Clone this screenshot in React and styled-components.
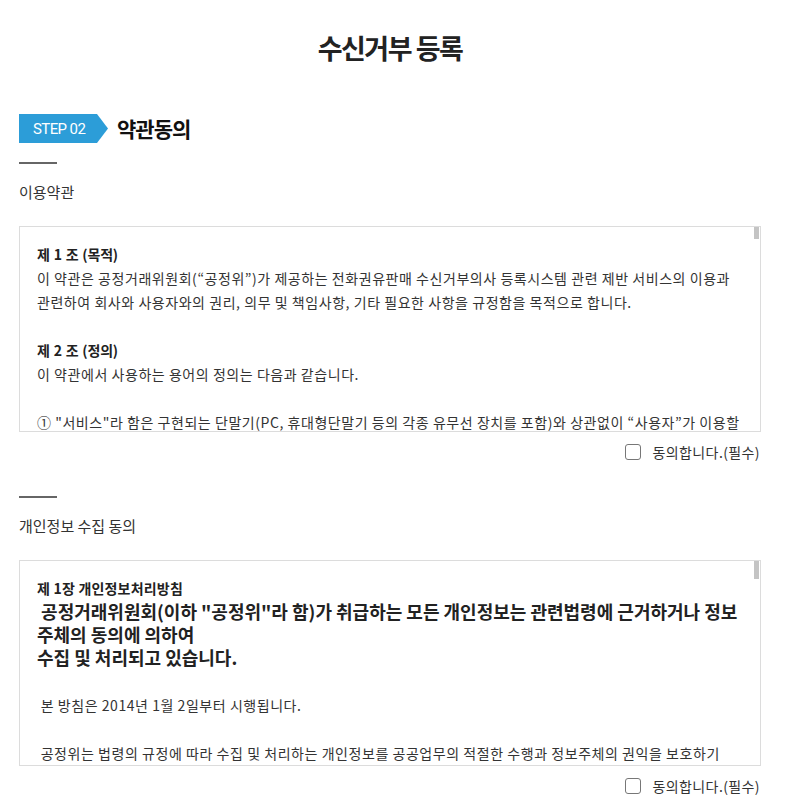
import React from 'react';
import styled, { createGlobalStyle } from 'styled-components';

const GlobalStyle = createGlobalStyle`
  html, body {
    margin: 0;
    padding: 0;
    background: #fff;
  }
  body {
    font-family: "Noto Sans CJK KR", "Noto Sans", sans-serif;
    color: #333;
  }
`;

const Page = styled.div`
  width: 742px;
  margin-left: 19px;
  padding: 30px 0 40px;
`;

const Title = styled.h1`
  margin: 0;
  text-align: center;
  font-size: 27px;
  line-height: 36px;
  font-weight: 700;
  letter-spacing: -1.5px;
  color: #222;
`;

const StepHeader = styled.div`
  display: flex;
  align-items: center;
  gap: 9px;
  margin-top: 48px;
`;

const StepBadge = styled.span`
  display: flex;
  align-items: center;
  box-sizing: border-box;
  width: 89px;
  height: 29px;
  padding-left: 14px;
  background: #2c9dd8;
  clip-path: polygon(0 0, 78px 0, 89px 50%, 78px 100%, 0 100%);
  color: #fff;
  font-family: Roboto, "Noto Sans", sans-serif;
  font-size: 15px;
  letter-spacing: -0.6px;
`;

const StepTitle = styled.h2`
  margin: 0;
  font-size: 21px;
  line-height: 29px;
  font-weight: 700;
  letter-spacing: -1px;
  color: #111;
`;

const Section = styled.section`
  margin-top: ${(p) => p.$gap}px;
`;

const Divider = styled.div`
  width: 38px;
  height: 2px;
  background: #666;
`;

const SubHeading = styled.h3`
  margin: 18px 0 0;
  font-size: 15px;
  line-height: 20px;
  font-weight: 400;
  letter-spacing: 0;
  color: #333;
`;

const BoxFrame = styled.div`
  position: relative;
  margin-top: 24px;
`;

const TermsBox = styled.div`
  height: 206px;
  box-sizing: border-box;
  border: 1px solid #dcdcdc;
  padding: 15px 20px 15px 17px;
  overflow-y: scroll;
  scrollbar-width: none;
  font-size: 14px;
  line-height: 24px;
  letter-spacing: 0.55px;
  word-break: keep-all;
  color: #333;
`;

const ScrollThumb = styled.div`
  position: absolute;
  top: 1px;
  right: 2px;
  width: 5px;
  height: ${(p) => p.$size}px;
  background: #c4c4c4;
`;

const Block = styled.div`
  margin-bottom: 24px;
`;

const ArticleTitle = styled.div`
  font-weight: 700;
  letter-spacing: -0.2px;
  word-spacing: 1px;
  color: #222;
`;

const ChapterTitle = styled.div`
  font-size: 14px;
  font-weight: 700;
  letter-spacing: 0.2px;
  color: #222;
`;

const Lead = styled.div`
  font-size: 18px;
  line-height: 23px;
  font-weight: 700;
  letter-spacing: 0;
  color: #222;
`;

const Para = styled.p`
  margin: 0;
`;

const AgreeRow = styled.label`
  display: flex;
  justify-content: flex-end;
  align-items: center;
  gap: 11px;
  height: 20px;
  margin-top: 10px;
  padding-right: 1px;
  font-size: 14px;
  letter-spacing: 0.4px;
  color: #333;
  cursor: pointer;
`;

const CheckBox = styled.input`
  appearance: none;
  margin: 0;
  width: 16px;
  height: 16px;
  border: 1px solid #777;
  border-radius: 3px;
  background: #fff;
`;

const terms = [
  {
    title: '제 1 조 (목적)',
    body: [
      '이 약관은 공정거래위원회(“공정위”)가 제공하는 전화권유판매 수신거부의사 등록시스템 관련 제반 서비스의 이용과 관련하여 회사와 사용자와의 권리, 의무 및 책임사항, 기타 필요한 사항을 규정함을 목적으로 합니다.',
    ],
  },
  {
    title: '제 2 조 (정의)',
    body: ['이 약관에서 사용하는 용어의 정의는 다음과 같습니다.'],
  },
  {
    body: [
      '① "서비스"라 함은 구현되는 단말기(PC, 휴대형단말기 등의 각종 유무선 장치를 포함)와 상관없이 “사용자”가 이용할 수 있는 전화권유판매 수신거부의사 등록시스템 관련 제반 서비스를 의미합니다.',
    ],
  },
  {
    body: [
      '② "사용자"라 함은 이 약관에 따라 공정위가 제공하는 서비스를 받는 개인을 말합니다.',
    ],
  },
  {
    body: [
      '③ "수신거부의사 등록"이라 함은 사용자가 전화권유판매자로부터 전화권유를 받지 않겠다는 의사를 시스템에 등록하는 것을 말합니다.',
    ],
  },
  {
    title: '제 3 조 (약관의 게시와 개정)',
    body: [
      '① 공정위는 이 약관의 내용을 사용자가 쉽게 알 수 있도록 서비스 초기 화면에 게시합니다.',
      '② 공정위는 관련법을 위배하지 않는 범위에서 이 약관을 개정할 수 있습니다.',
      '③ 공정위가 약관을 개정할 경우에는 적용일자 및 개정사유를 명시하여 현행약관과 함께 적용일자 7일 전부터 공지합니다.',
    ],
  },
  {
    title: '제 4 조 (서비스의 제공)',
    body: [
      '① 공정위는 다음과 같은 업무를 수행합니다.',
      '1. 전화권유판매 수신거부의사 등록 및 해지',
      '2. 수신거부의사 등록 여부의 확인',
      '3. 기타 공정위가 정하는 업무',
      '② 서비스는 연중무휴, 1일 24시간 제공함을 원칙으로 합니다.',
    ],
  },
  {
    title: '제 5 조 (서비스의 중단)',
    body: [
      '① 공정위는 컴퓨터 등 정보통신설비의 보수점검, 교체 및 고장, 통신두절 등의 사유가 발생한 경우에는 서비스의 제공을 일시적으로 중단할 수 있습니다.',
      '② 공정위는 서비스의 중단으로 인하여 사용자가 입은 손해에 대하여 고의 또는 과실이 없는 한 책임을 지지 않습니다.',
    ],
  },
  {
    title: '제 6 조 (사용자의 의무)',
    body: [
      '① 사용자는 수신거부의사 등록 시 본인의 정확한 정보를 입력하여야 합니다.',
      '② 사용자는 타인의 정보를 도용하여 등록하여서는 안 됩니다.',
      '③ 사용자는 관계법령, 이 약관의 규정, 이용안내 및 서비스와 관련하여 공지한 주의사항을 준수하여야 합니다.',
    ],
  },
  {
    title: '제 7 조 (개인정보보호)',
    body: [
      '공정위는 관계법령이 정하는 바에 따라 사용자의 개인정보를 보호하기 위해 노력합니다. 개인정보의 보호 및 사용에 대해서는 관련법 및 공정위의 개인정보처리방침이 적용됩니다.',
    ],
  },
  {
    title: '제 8 조 (면책조항)',
    body: [
      '① 공정위는 천재지변 또는 이에 준하는 불가항력으로 인하여 서비스를 제공할 수 없는 경우에는 서비스 제공에 관한 책임이 면제됩니다.',
      '② 공정위는 사용자의 귀책사유로 인한 서비스 이용의 장애에 대하여는 책임을 지지 않습니다.',
    ],
  },
  {
    title: '부칙',
    body: ['이 약관은 2014년 1월 2일부터 시행합니다.'],
  },
];

const privacy = [
  '\u00a0본 방침은 2014년 1월 2일부터 시행됩니다.',
  '\u00a0공정위는 법령의 규정에 따라 수집 및 처리하는 개인정보를 공공업무의 적절한 수행과 정보주체의 권익을 보호하기 위하여 적법하고 적정하게 취급할 것입니다.',
  '\u00a0또한, 공정위는 관련 법령에서 규정한 바에 따라 공정위에서 보유하고 있는 개인정보에 대한 열람청구권 및 정정청구권 등 이용자의 권익을 존중하며, 이용자는 이러한 법령상 권익의 침해 등에 대하여 행정심판법에서 정하는 바에 따라 행정심판을 청구할 수 있습니다.',
  '제 1조 (개인정보의 처리 목적)',
  '\u00a0공정위는 수신거부의사 등록 및 확인 업무의 처리를 위하여 필요한 최소한의 개인정보를 처리합니다. 처리하고 있는 개인정보는 다음의 목적 이외의 용도로는 이용되지 않으며, 이용 목적이 변경되는 경우에는 별도의 동의를 받는 등 필요한 조치를 이행할 예정입니다.',
  '제 2조 (처리하는 개인정보의 항목)',
  '\u00a0필수항목 : 성명, 생년월일, 전화번호',
  '제 3조 (개인정보의 처리 및 보유 기간)',
  '\u00a0공정위는 법령에 따른 개인정보 보유·이용기간 또는 정보주체로부터 개인정보를 수집 시에 동의 받은 개인정보 보유·이용기간 내에서 개인정보를 처리·보유합니다.',
];

function Agree({ id }) {
  return (
    <AgreeRow htmlFor={id}>
      <CheckBox type="checkbox" id={id} />
      동의합니다.(필수)
    </AgreeRow>
  );
}

export default function App() {
  return (
    <>
      <GlobalStyle />
      <Page>
        <Title>수신거부 등록</Title>

        <StepHeader>
          <StepBadge>STEP 02</StepBadge>
          <StepTitle>약관동의</StepTitle>
        </StepHeader>

        <Section $gap={19}>
          <Divider />
          <SubHeading>이용약관</SubHeading>
          <BoxFrame>
            <TermsBox>
              {terms.map((t, i) => (
                <Block key={i}>
                  {t.title && <ArticleTitle>{t.title}</ArticleTitle>}
                  {t.body.map((line, j) => (
                    <Para key={j}>{line}</Para>
                  ))}
                </Block>
              ))}
            </TermsBox>
            <ScrollThumb $size={12} />
          </BoxFrame>
          <Agree id="agree-terms" />
        </Section>

        <Section $gap={34}>
          <Divider />
          <SubHeading>개인정보 수집 동의</SubHeading>
          <BoxFrame>
            <TermsBox>
              <Block>
                <ChapterTitle>제 1장 개인정보처리방침</ChapterTitle>
                <Lead>
                  {'\u00a0'}공정거래위원회(이하 "공정위"라 함)가 취급하는 모든 개인정보는 관련법령에 근거하거나 정보 주체의 동의에 의하여
                  <br />
                  수집 및 처리되고 있습니다.
                </Lead>
              </Block>
              {privacy.map((line, i) => (
                <Block key={i}>
                  {line.startsWith('제 ') ? (
                    <ArticleTitle>{line}</ArticleTitle>
                  ) : (
                    <Para>{line}</Para>
                  )}
                </Block>
              ))}
            </TermsBox>
            <ScrollThumb $size={18} />
          </BoxFrame>
          <Agree id="agree-privacy" />
        </Section>
      </Page>
    </>
  );
}
